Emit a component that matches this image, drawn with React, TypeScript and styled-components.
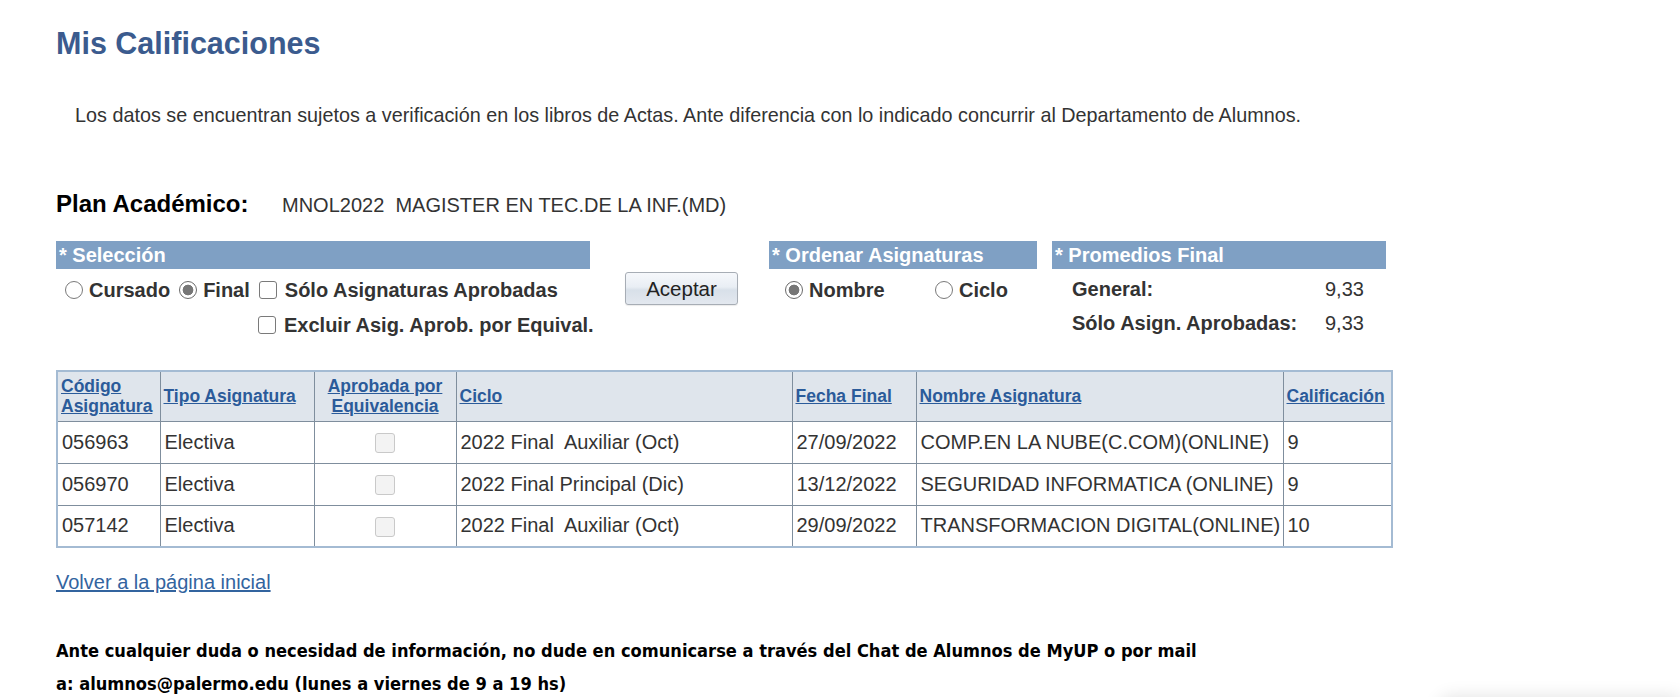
import React from 'react';
import styled, { createGlobalStyle } from 'styled-components';

const Global = createGlobalStyle`
  html, body { margin: 0; padding: 0; background: #fff; }
  body { font-family: "Liberation Sans", Arial, sans-serif; color: #333; }
  * { box-sizing: border-box; }
`;

const Page = styled.div`
  position: relative;
  width: 1680px;
  height: 697px;
  overflow: hidden;
  padding: 25px 0 0 56px;
`;

const Title = styled.h1`
  margin: 0;
  font-size: 30.5px;
  line-height: 36px;
  font-weight: bold;
  color: #3b5b8e;
`;

const Notice = styled.p`
  margin: 42px 0 0 19px;
  font-size: 19.8px;
  line-height: 24px;
  color: #333;
`;

const PlanRow = styled.div`
  display: flex;
  align-items: baseline;
  margin-top: 63px;
  height: 28px;
`;

const PlanLabel = styled.span`
  width: 226px;
  font-size: 24px;
  font-weight: bold;
  color: #000;
`;

const PlanValue = styled.span`
  font-size: 20px;
  color: #333;
`;

const Sections = styled.div`
  display: flex;
  align-items: flex-start;
  margin-top: 23px;
`;

const Section = styled.div<{ $w: number; $ml?: number }>`
  flex: none;
  width: ${(p) => p.$w}px;
  margin-left: ${(p) => p.$ml ?? 0}px;
`;

const SectionHeader = styled.div`
  height: 28px;
  line-height: 28px;
  padding-left: 3px;
  background: #7fa0c4;
  color: #fff;
  font-size: 20px;
  font-weight: bold;
`;

const OptionRow = styled.div<{ $pl: number; $mt: number }>`
  display: flex;
  align-items: center;
  height: 24px;
  padding-left: ${(p) => p.$pl}px;
  margin-top: ${(p) => p.$mt}px;
  white-space: nowrap;
`;

const Option = styled.label<{ $w?: number }>`
  display: inline-flex;
  flex: none;
  align-items: center;
  margin-right: 9px;
  font-size: 20px;
  font-weight: bold;
  color: #333;
  ${(p) => (p.$w ? `width: ${p.$w}px;` : '')}
  &:last-child { margin-right: 0; }
`;

const Radio = styled.input.attrs({ type: 'radio' })`
  appearance: none;
  flex: none;
  width: 18px;
  height: 18px;
  margin: 0 6px 0 0;
  border-radius: 50%;
  border: 1.6px solid #7a7a7a;
  background: #fff;
  &:checked {
    border-color: #6a6a6a;
    background: radial-gradient(circle, #767676 0 5px, #fff 5.7px);
  }
`;

const Check = styled.input.attrs({ type: 'checkbox' })`
  appearance: none;
  flex: none;
  width: 18px;
  height: 18px;
  margin: 0 8px 0 0;
  border-radius: 3px;
  border: 1.6px solid #7a7a7a;
  background: #fff;
`;

const AcceptButton = styled.button`
  flex: none;
  margin: 31px 0 0 35px;
  width: 113px;
  height: 33px;
  border: 1px solid #a7adb5;
  border-radius: 3px;
  background: linear-gradient(#f6f8fb 0%, #e9eef4 45%, #d8e0e9 55%, #e3e8ef 100%);
  box-shadow: 0 1px 1px rgba(0, 0, 0, 0.08);
  font-family: "Liberation Sans", Arial, sans-serif;
  font-size: 20.5px;
  color: #222;
  padding: 0;
`;

const Averages = styled.div`
  display: grid;
  grid-template-columns: 253px auto;
  row-gap: 10px;
  padding: 8px 0 0 20px;
  font-size: 20px;
  line-height: 24px;
`;

const AvgLabel = styled.span`
  font-weight: bold;
  color: #333;
`;

const AvgValue = styled.span`
  color: #333;
`;

const Grid = styled.table`
  margin-top: 33px;
  width: 1335px;
  table-layout: fixed;
  border-collapse: collapse;
  border: 2px solid #a4bbd3;
`;

const HeadCell = styled.th<{ $center?: boolean }>`
  height: 50px;
  padding: 0 3px;
  background: #dfe5ec;
  border: 1px solid #7f8e9d;
  text-align: ${(p) => (p.$center ? 'center' : 'left')};
  vertical-align: middle;
  font-size: 17.5px;
  line-height: 20px;
  font-weight: bold;
`;

const HeadLink = styled.a`
  color: #2b5b9a;
  text-decoration: underline;
`;

const Cell = styled.td<{ $center?: boolean }>`
  height: 42px;
  padding: 0 4px;
  border: 1px solid #7f8e9d;
  font-size: 20px;
  color: #333;
  vertical-align: middle;
  white-space: nowrap;
  text-align: ${(p) => (p.$center ? 'center' : 'left')};
`;

const DisabledBox = styled.span`
  display: inline-block;
  vertical-align: middle;
  width: 20px;
  height: 20px;
  border: 1px solid #c9c9c9;
  border-radius: 3px;
  background: #f3f3f3;
`;

const BackLink = styled.a`
  display: block;
  width: fit-content;
  margin-top: 22px;
  font-size: 20px;
  line-height: 24px;
  color: #33649f;
  text-decoration: underline;
`;

const Help = styled.p`
  margin: 40px 0 0;
  font-family: "DejaVu Sans", Verdana, sans-serif;
  font-stretch: condensed;
  font-size: 18.1px;
  font-weight: bold;
  line-height: 33px;
  color: #000;
  white-space: nowrap;
`;

const FloatShadow = styled.div`
  position: absolute;
  right: 0;
  bottom: -40px;
  width: 240px;
  height: 40px;
  border-radius: 10px 0 0 0;
  box-shadow: 0 0 18px rgba(0, 0, 0, 0.12);
`;

const cols = [103, 154, 142, 336, 124, 367, 109];

const rows = [
  ['056963', 'Electiva', '2022 Final\u00a0 Auxiliar (Oct)', '27/09/2022', 'COMP.EN LA NUBE(C.COM)(ONLINE)', '9'],
  ['056970', 'Electiva', '2022 Final Principal (Dic)', '13/12/2022', 'SEGURIDAD INFORMATICA (ONLINE)', '9'],
  ['057142', 'Electiva', '2022 Final\u00a0 Auxiliar (Oct)', '29/09/2022', 'TRANSFORMACION DIGITAL(ONLINE)', '10'],
];

export default function App() {
  return (
    <Page>
      <Global />
      <Title>Mis Calificaciones</Title>
      <Notice>
        Los datos se encuentran sujetos a verificación en los libros de Actas. Ante diferencia con lo indicado concurrir al Departamento de Alumnos.
      </Notice>
      <PlanRow>
        <PlanLabel>Plan Académico:</PlanLabel>
        <PlanValue>MNOL2022&nbsp; MAGISTER EN TEC.DE LA INF.(MD)</PlanValue>
      </PlanRow>
      <Sections>
        <Section $w={534}>
          <SectionHeader>* Selección</SectionHeader>
          <OptionRow $pl={9} $mt={9}>
            <Option>
              <Radio name="tipo" />
              Cursado
            </Option>
            <Option>
              <Radio name="tipo" defaultChecked />
              Final
            </Option>
            <Option>
              <Check />
              Sólo Asignaturas Aprobadas
            </Option>
          </OptionRow>
          <OptionRow $pl={202} $mt={11}>
            <Option>
              <Check />
              Excluir Asig. Aprob. por Equival.
            </Option>
          </OptionRow>
        </Section>
        <AcceptButton>Aceptar</AcceptButton>
        <Section $w={268} $ml={31}>
          <SectionHeader>* Ordenar Asignaturas</SectionHeader>
          <OptionRow $pl={16} $mt={9}>
            <Option $w={141}>
              <Radio name="orden" defaultChecked />
              Nombre
            </Option>
            <Option>
              <Radio name="orden" />
              Ciclo
            </Option>
          </OptionRow>
        </Section>
        <Section $w={334} $ml={15}>
          <SectionHeader>* Promedios Final</SectionHeader>
          <Averages>
            <AvgLabel>General:</AvgLabel>
            <AvgValue>9,33</AvgValue>
            <AvgLabel>Sólo Asign. Aprobadas:</AvgLabel>
            <AvgValue>9,33</AvgValue>
          </Averages>
        </Section>
      </Sections>
      <Grid>
        <colgroup>
          {cols.map((w, i) => (
            <col key={i} style={{ width: w }} />
          ))}
        </colgroup>
        <thead>
          <tr>
            <HeadCell><HeadLink>Código<br />Asignatura</HeadLink></HeadCell>
            <HeadCell><HeadLink>Tipo Asignatura</HeadLink></HeadCell>
            <HeadCell $center><HeadLink>Aprobada por<br />Equivalencia</HeadLink></HeadCell>
            <HeadCell><HeadLink>Ciclo</HeadLink></HeadCell>
            <HeadCell><HeadLink>Fecha Final</HeadLink></HeadCell>
            <HeadCell><HeadLink>Nombre Asignatura</HeadLink></HeadCell>
            <HeadCell><HeadLink>Calificación</HeadLink></HeadCell>
          </tr>
        </thead>
        <tbody>
          {rows.map((r) => (
            <tr key={r[0]}>
              <Cell>{r[0]}</Cell>
              <Cell>{r[1]}</Cell>
              <Cell $center><DisabledBox /></Cell>
              <Cell>{r[2]}</Cell>
              <Cell>{r[3]}</Cell>
              <Cell>{r[4]}</Cell>
              <Cell>{r[5]}</Cell>
            </tr>
          ))}
        </tbody>
      </Grid>
      <BackLink>Volver a la página inicial</BackLink>
      <Help>
        Ante cualquier duda o necesidad de información, no dude en comunicarse a través del Chat de Alumnos de MyUP o por mail
        <br />
        a: alumnos@palermo.edu (lunes a viernes de 9 a 19 hs)
      </Help>
      <FloatShadow />
    </Page>
  );
}
